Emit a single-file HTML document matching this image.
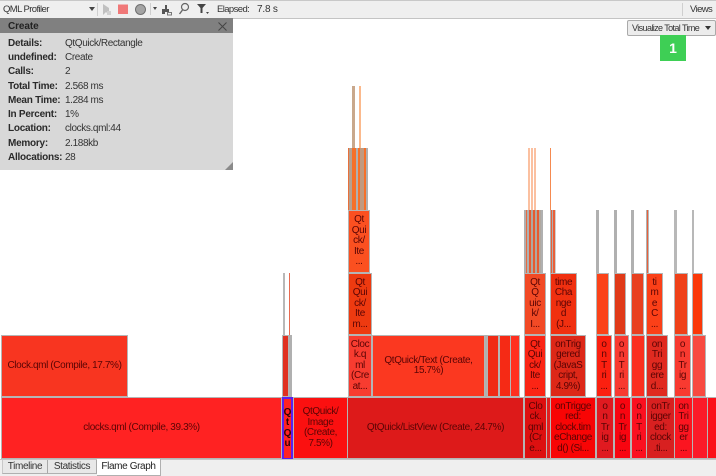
<!DOCTYPE html>
<html><head><meta charset="utf-8">
<style>
html,body{margin:0;padding:0}
body{width:716px;height:476px;overflow:hidden;background:#fff;position:relative;font-family:"Liberation Sans",sans-serif;font-size:10px;color:#222;letter-spacing:-.38px}
div{box-sizing:border-box}
.a{position:absolute}
.b{position:absolute;border:1px solid #b5b5b5;display:flex;align-items:center;justify-content:center;text-align:center;font-size:10px;line-height:10.5px;color:#5a0505;overflow:hidden;white-space:nowrap}
.t{position:absolute;background:#b0b0b0}
.l{position:absolute;left:8px;font-weight:bold;color:#2a2a2a;white-space:nowrap;font-size:10px;letter-spacing:-.25px}
.v{position:absolute;left:65px;color:#333;white-space:nowrap;font-size:10px}
.n{position:absolute;color:#333;font-size:10px;letter-spacing:-.8px;white-space:nowrap}
</style></head><body>

<!-- toolbar -->
<div class="a" style="left:0;top:0;width:716px;height:19px;background:#efefef;border-top:1px solid #c8c8c8;border-bottom:1px solid #c4c4c4"></div>
<div class="n" style="left:3px;top:4px;font-size:9.5px;letter-spacing:-.6px">QML Profiler</div>
<div class="a" style="left:89px;top:7px;border-left:3px solid transparent;border-right:3px solid transparent;border-top:4px solid #444"></div>
<div class="a" style="left:97px;top:3px;width:1px;height:13px;background:#cfcfcf"></div>
<svg class="a" style="left:100px;top:1px" width="200" height="16">
<path d="M3 3v11l3-3 3 3V7z" fill="#c0c0c0"/><path d="M7 10h4v4H7z" fill="#d0d0d0"/>
<rect x="18" y="3.500" width="10" height="9.500" fill="#f07878"/>
<circle cx="40.500" cy="8.500" r="5" fill="#a4a4a4" stroke="#707070"/>
<path d="M50.500 2v12" stroke="#cfcfcf"/><path d="M53 6h4l-2 3z" fill="#444"/>
<path d="M65 4h2v4h-2zM62 8h7v3h-7zM62 11h3v2h-3z" fill="#555"/><path d="M67.500 11.500h4v2.500h-4z" fill="none" stroke="#777"/>
<circle cx="85" cy="6" r="3.500" fill="none" stroke="#666" stroke-width="1.200"/><path d="M82.500 9l-3 4" stroke="#666" stroke-width="1.400"/>
<path d="M97 3h9l-3.500 4v5h-2V7z" fill="#444"/><path d="M106 11h3l-1.500 2z" fill="#444"/>
</svg>
<div class="n" style="left:217px;top:4px;font-size:9.5px;letter-spacing:-.6px">Elapsed:</div>
<div class="n" style="left:257px;top:4px;letter-spacing:-.2px">7.8 s</div>
<div class="a" style="left:682px;top:3px;width:1px;height:13px;background:#cfcfcf"></div>
<div class="n" style="left:690px;top:4px;font-size:9.5px;letter-spacing:-.6px">Views</div>

<!-- flame graph row 6 / 5 / 4 thin -->
<div class="a" style="left:352px;top:86px;width:3px;height:63px;background:#c9a88c"></div>
<div class="a" style="left:359px;top:86px;width:2px;height:63px;background:#fbb98c"></div>
<div class="a" style="left:348px;top:148px;width:20px;height:63px;background-image:linear-gradient(90deg,#e8703a 0 1px,#b5a090 1px 4px,#f5702a 4px 8px,#b0b0b0 8px 10px,#f5702a 10px 12px,#c09a80 12px 16px,#f5702a 16px 18px,#b0b0b0 18px 20px)"></div>
<div class="a" style="left:528px;top:148px;width:2px;height:63px;background:#fbc0a0"></div>
<div class="a" style="left:531px;top:148px;width:2px;height:63px;background:#fbc0a0"></div>
<div class="a" style="left:534px;top:148px;width:2px;height:63px;background:#fbc0a0"></div>
<div class="a" style="left:550px;top:148px;width:1px;height:63px;background:#f58a50"></div>
<div class="a" style="left:524px;top:210px;width:19px;height:63px;background-image:linear-gradient(90deg,#b0b0b0 0 2px,#e86a40 2px 3px,#b0b0b0 3px 5px,#e85a30 5px 7px,#b0a8a0 7px 9px,#e85a30 9px 11px,#b0a8a0 11px 13px,#e85a30 13px 15px,#b0a8a0 15px 17px,#b0b0b0 17px 19px)"></div>
<div class="a" style="left:550px;top:210px;width:6px;height:63px;background-image:linear-gradient(90deg,#b0b0b0 0 1px,#e8603a 1px 2px,#b0b0b0 2px 3px,#e8603a 3px 5px,#d0d0d0 5px 6px)"></div>
<div class="t" style="left:596px;top:210px;width:3px;height:63px"></div>
<div class="t" style="left:614px;top:210px;width:3px;height:63px"></div>
<div class="t" style="left:631px;top:210px;width:3px;height:63px"></div>
<div class="a" style="left:646px;top:210px;width:3px;height:63px;background-image:linear-gradient(90deg,#b0b0b0 0 1px,#e8603a 1px 2px,#b8b8b8 2px 3px)"></div>
<div class="t" style="left:674px;top:210px;width:3px;height:63px;background:#b8b8b8"></div>
<div class="t" style="left:692px;top:210px;width:2px;height:63px;background:#b8b8b8"></div>

<!-- row 4 -->
<div class="b" style="left:348px;top:210px;width:22px;height:63px;background:#fb5020">Qt<br>Qui<br>ck/<br>Ite<br>...</div>

<!-- row 3 -->
<div class="t" style="left:283px;top:273px;width:2px;height:62px;background:#b8b8b8"></div>
<div class="a" style="left:289px;top:273px;width:1px;height:62px;background:#e86a50"></div>
<div class="b" style="left:348px;top:273px;width:24px;height:62px;background:#ee3a10">Qt<br>Qui<br>ck/<br>Ite<br>m...</div>
<div class="b" style="left:524px;top:273px;width:22px;height:62px;background:#f24a25">Qt<br>Q<br>uic<br>k/<br>I...</div>
<div class="b" style="left:550px;top:273px;width:27px;height:62px;background:#f03010">time<br>Cha<br>nge<br>d<br>(J...</div>
<div class="b" style="left:596px;top:273px;width:13px;height:62px;background:#fb4218"></div>
<div class="b" style="left:614px;top:273px;width:12px;height:62px;background:#e03a18"></div>
<div class="b" style="left:631px;top:273px;width:13px;height:62px;background:#e84020"></div>
<div class="b" style="left:646px;top:273px;width:17px;height:62px;background:#fb4018">ti<br>m<br>e<br>C<br>...</div>
<div class="b" style="left:674px;top:273px;width:14px;height:62px;background:#ef4018"></div>
<div class="b" style="left:692px;top:273px;width:11px;height:62px;background:#fb3808"></div>

<!-- row 2 -->
<div class="b" style="left:1px;top:335px;width:127px;height:62px;background:#f83520">Clock.qml (Compile, 17.7%)</div>
<div class="b" style="left:282px;top:335px;width:7px;height:62px;background:#e03020"></div>
<div class="t" style="left:289px;top:335px;width:3px;height:62px"></div>
<div class="b" style="left:348px;top:335px;width:24px;height:62px;background:#f83c30">Cloc<br>k.q<br>ml<br>(Cre<br>at...</div>
<div class="b" style="left:372px;top:335px;width:113px;height:62px;background:#fb3820">QtQuick/Text (Create,<br>15.7%)</div>
<div class="t" style="left:485px;top:335px;width:2px;height:62px"></div>
<div class="b" style="left:487px;top:335px;width:12px;height:62px;background:#f02a15"></div>
<div class="b" style="left:499px;top:335px;width:12px;height:62px;background:#f52a15"></div>
<div class="b" style="left:510px;top:335px;width:10px;height:62px;background:#ff3020"></div>
<div class="b" style="left:524px;top:335px;width:22px;height:62px;background:#fb2515">Qt<br>Qui<br>ck/<br>Ite<br>...</div>
<div class="b" style="left:550px;top:335px;width:36px;height:62px;background:#dd2818">onTrig<br>gered<br>(JavaS<br>cript,<br>4.9%)</div>
<div class="b" style="left:596px;top:335px;width:16px;height:62px;background:#fb2010">o<br>n<br>T<br>ri<br>...</div>
<div class="b" style="left:614px;top:335px;width:15px;height:62px;background:#f83a30">o<br>n<br>T<br>ri<br>...</div>
<div class="b" style="left:631px;top:335px;width:14px;height:62px;background:#fb3020"></div>
<div class="b" style="left:646px;top:335px;width:22px;height:62px;background:#e02a20">on<br>Tri<br>gg<br>ere<br>d...</div>
<div class="b" style="left:674px;top:335px;width:17px;height:62px;background:#f83a30">o<br>n<br>Tr<br>ig<br>...</div>
<div class="b" style="left:692px;top:335px;width:14px;height:62px;background:#f84a40"></div>

<!-- row 1 -->
<div class="b" style="left:1px;top:397px;width:281px;height:62px;background:#ff2222">clocks.qml (Compile, 39.3%)</div>
<div class="b" style="left:282px;top:397px;width:11px;height:63px;background:#ff2222;border:2px solid #5a20f0;font-weight:bold;color:#300;letter-spacing:0">Q<br>t<br>Q<br>u</div>
<div class="b" style="left:293px;top:397px;width:55px;height:62px;background:#fb1010">QtQuick/<br>Image<br>(Create,<br>7.5%)</div>
<div class="b" style="left:347px;top:397px;width:177px;height:62px;background:#dd1a1a">QtQuick/ListView (Create, 24.7%)</div>
<div class="b" style="left:524px;top:397px;width:23px;height:62px;background:#dd1010">Clo<br>ck.<br>qml<br>(Cr<br>e...</div>
<div class="b" style="left:546px;top:397px;width:5px;height:62px;background:#e02020"></div>
<div class="b" style="left:550px;top:397px;width:46px;height:62px;background:#f80505">onTrigge<br>red:<br>clock.tim<br>eChange<br>d() (Si...</div>
<div class="b" style="left:596px;top:397px;width:18px;height:62px;background:#e01a20">o<br>n<br>Tr<br>ig<br>...</div>
<div class="b" style="left:614px;top:397px;width:17px;height:62px;background:#f80510">o<br>n<br>Tr<br>ig<br>...</div>
<div class="b" style="left:631px;top:397px;width:16px;height:62px;background:#fb1020">o<br>n<br>T<br>ri<br>...</div>
<div class="b" style="left:646px;top:397px;width:29px;height:62px;background:#d82020">onTr<br>igger<br>ed:<br>clock<br>.ti...</div>
<div class="b" style="left:674px;top:397px;width:19px;height:62px;background:#fb1520">on<br>Tri<br>gg<br>er<br>...</div>
<div class="b" style="left:692px;top:397px;width:16px;height:62px;background:#fb1a28"></div>
<div class="b" style="left:707px;top:397px;width:10px;height:62px;background:#fb1018"></div>

<!-- details panel -->
<div class="a" style="left:0;top:18px;width:233px;height:152px;background:#d8d8d8">
<div class="a" style="left:0;top:0;width:233px;height:15px;background:#808080"></div>
<div class="a" style="left:8px;top:3px;font-weight:bold;color:#222;font-size:10px;letter-spacing:-.1px">Create</div>
<svg class="a" style="left:217px;top:3px" width="11" height="11"><path d="M1.500 1.500l8 8M9.500 1.500l-8 8" stroke="#444" stroke-width="1"/></svg>
<div class="l" style="top:20px">Details:</div><div class="v" style="top:20px">QtQuick/Rectangle</div>
<div class="l" style="top:34px">undefined:</div><div class="v" style="top:34px">Create</div>
<div class="l" style="top:48px">Calls:</div><div class="v" style="top:48px">2</div>
<div class="l" style="top:63px">Total Time:</div><div class="v" style="top:63px">2.568 ms</div>
<div class="l" style="top:77px">Mean Time:</div><div class="v" style="top:77px">1.284 ms</div>
<div class="l" style="top:91px">In Percent:</div><div class="v" style="top:91px">1%</div>
<div class="l" style="top:105px">Location:</div><div class="v" style="top:105px">clocks.qml:44</div>
<div class="l" style="top:120px">Memory:</div><div class="v" style="top:120px">2.188kb</div>
<div class="l" style="top:134px">Allocations:</div><div class="v" style="top:134px">28</div>
<svg class="a" style="left:225px;top:144px" width="8" height="8"><path d="M8 0v8H0z" fill="#8a8a8a"/></svg>
</div>

<!-- visualize button -->
<div class="a" style="left:627px;top:20px;width:89px;height:16px;background:#ececec;border:1px solid #aaa;border-radius:2px;color:#333;font-size:9px;letter-spacing:-.6px;line-height:14px;padding-left:4px;white-space:nowrap;overflow:hidden">Visualize Total Time</div>
<div class="a" style="left:705px;top:26px;border-left:3.500px solid transparent;border-right:3.500px solid transparent;border-top:4px solid #333"></div>
<div class="a" style="left:660px;top:35px;width:26px;height:26px;background:#3ecf55;color:#fff;font-weight:bold;font-size:14px;line-height:26px;text-align:center;letter-spacing:0">1</div>

<!-- tabs -->
<div class="a" style="left:0;top:459px;width:716px;height:17px;background:#efefef;border-top:1px solid #c4c4c4"></div>
<div class="a" style="left:2px;top:460px;width:46px;height:14px;background:#e8e8e8;border-right:1px solid #a8a8a8;border-left:1px solid #c8c8c8;border-bottom:1px solid #b0b0b0;color:#333;text-align:center;line-height:13px">Timeline</div>
<div class="a" style="left:48px;top:460px;width:49px;height:14px;background:#e8e8e8;border-right:1px solid #a8a8a8;border-bottom:1px solid #b0b0b0;color:#333;text-align:center;line-height:13px">Statistics</div>
<div class="a" style="left:97px;top:459px;width:64px;height:17px;background:#fff;border-right:1px solid #b0b0b0;border-bottom:1px solid #b0b0b0;color:#222;text-align:center;line-height:16px">Flame Graph</div>

</body></html>
